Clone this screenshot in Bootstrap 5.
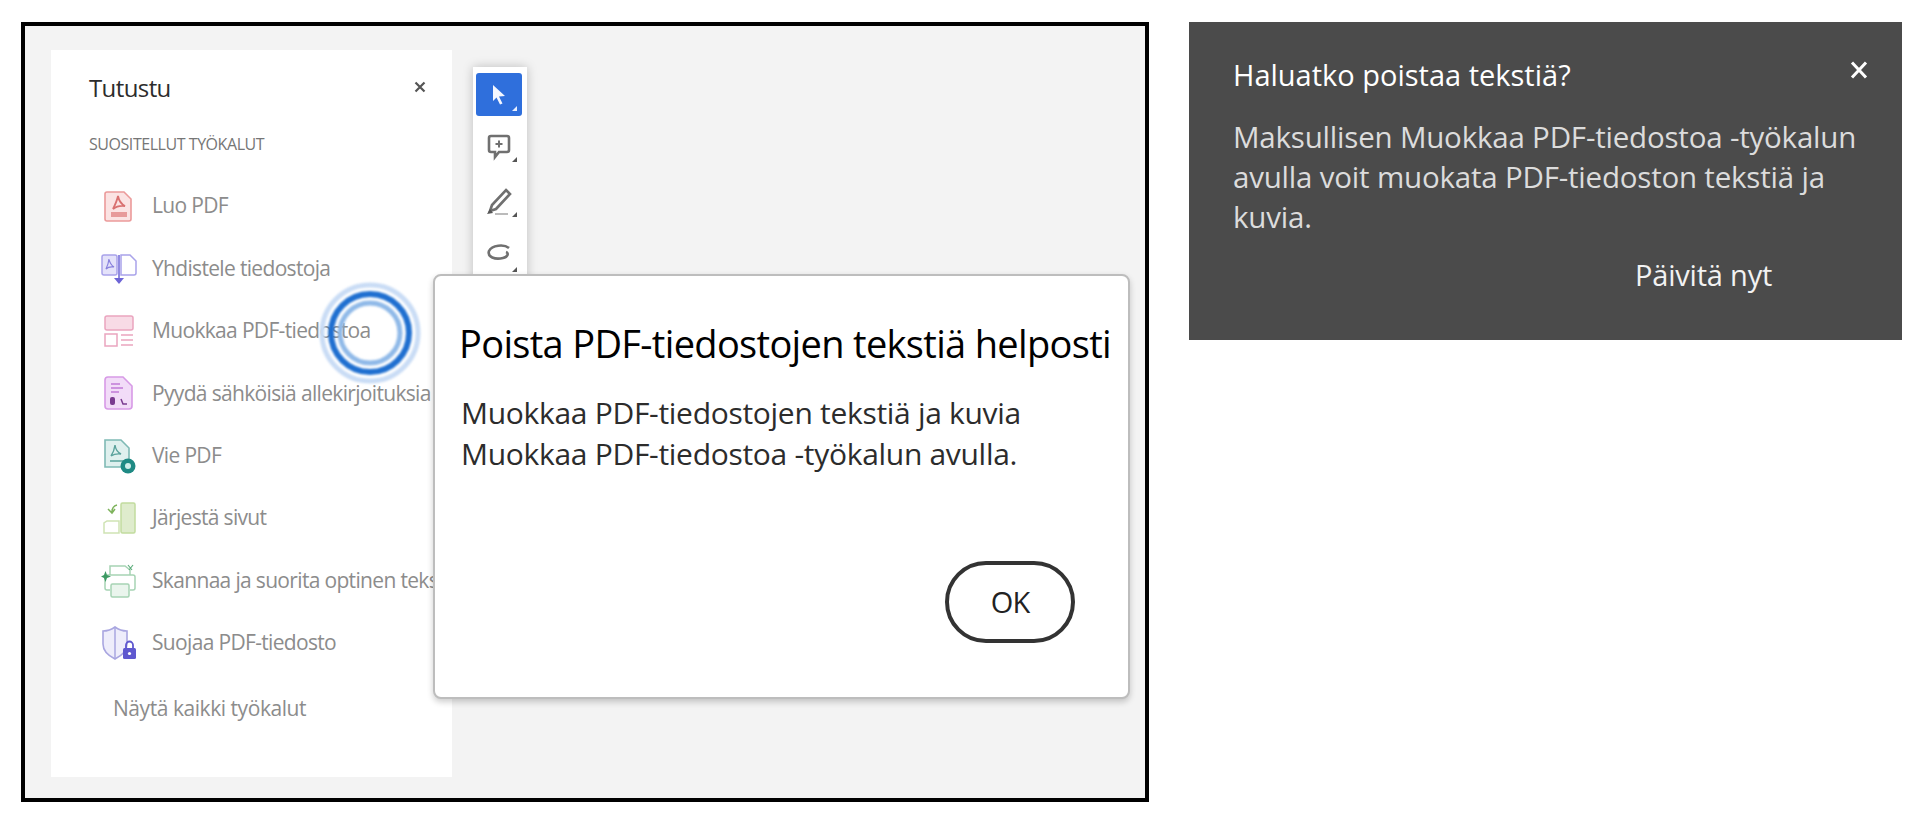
<!DOCTYPE html>
<html lang="fi">
<head>
    <title>Poista tekstiä</title>
    <meta charset="UTF-8">
    <meta name="viewport" content="width=device-width, initial-scale=1.0">
    <link href="https://cdn.jsdelivr.net/npm/bootstrap@5.3.0/dist/css/bootstrap.min.css" rel="stylesheet">
    <style>
        body { font-family: "Open Sans", "Noto Sans", sans-serif; background: #fff; overflow: hidden; }
        .page-wrap { padding: 22px 18px 0 21px; gap: 40px; }
        .app-frame { position: relative; width: 1128px; height: 780px; flex: none; border: 4px solid #000; background: #f3f3f3; padding: 24px 26px; overflow: hidden; }
        .tool-panel { width: 401px; height: 727px; flex: none; background: #fff; padding: 0 26px 0 38px; overflow: hidden; }
        .panel-head { height: 79px; padding-top: 20px; font-size: 24px; line-height: 36px; letter-spacing: -.6px; color: #2c2c2c; }
        .panel-close { width: 12px; height: 12px; margin-top: 11px; }
        .panel-sub { font-size: 16px; letter-spacing: -.45px; color: #767676; height: 46px; line-height: 30px; white-space: nowrap; }
        .tool-row { height: 62.4px; padding: 0 0 0 12px; gap: 15px; border: 0; background: transparent; font-size: 21px; letter-spacing: -.67px; color: #8c8c8c; white-space: nowrap; }
        .tool-row svg { width: 36px; height: 36px; flex: none; filter: blur(.6px); }
        .show-all { padding: 19px 0 0 24px; font-size: 21px; letter-spacing: -.45px; color: #8c8c8c; }
        .tool-strip { width: 54px; margin: 17px 0 0 21px; height: 300px; flex: none; background: #fff; box-shadow: 0 0 10px rgba(0,0,0,.22); padding: 6px 3px; gap: 12px; }
        .strip-btn { width: 46px; height: 43px; flex: none; border-radius: 3px; }
        .strip-on { background: #2f6fdc; }
        .strip-btn svg { width: 46px; height: 43px; display: block; filter: blur(.5px); }
        .help-ring { position: absolute; left: 293px; top: 255px; width: 104px; height: 104px; filter: blur(.8px); }
        .hint-card { position: absolute; left: 408px; top: 248px; width: 697px; height: 425px; border: 2px solid #bdbdbd; border-radius: 8px; box-shadow: 0 3px 6px rgba(0,0,0,.2); background: #fff; padding: 0 0 0 24px; }
        .hint-title { margin: 43px 0 0; font-size: 38px; font-weight: 400; line-height: 48px; letter-spacing: -.67px; color: #000; white-space: nowrap; }
        .hint-text { margin: 26px 0 0 2px; font-size: 30px; line-height: 40.5px; letter-spacing: -.3px; color: #2c2c2c; }
        .ok-btn { position: absolute; left: 510px; top: 285px; width: 130px; height: 82px; padding: 0; border: 4px solid #333; border-radius: 41px; background: #fff; font-size: 29px; letter-spacing: -.8px; color: #222; }
        .upsell { width: 713px; height: 318px; flex: none; background: #4b4b4b; padding: 34px 44px; color: #dcdcdc; }
        .upsell-title { font-size: 29px; line-height: 38px; letter-spacing: 0; color: #fff; margin: 0; font-weight: 400; }
        .upsell-x { width: 18px; height: 18px; margin: 5px -10px 0 0; }
        .upsell-text { margin: 23px 0 0; font-size: 29.500px; line-height: 40px; letter-spacing: -.2px; }
        .upsell-link { margin: 18px 0 0 402px; font-size: 29px; letter-spacing: -.2px; line-height: 40px; color: #f2f2f2; }
    </style>
</head>
<body>
    <div class="page-wrap d-flex align-items-start">
        <div class="app-frame d-flex align-items-start">
            <div class="tool-panel">
                <div class="panel-head d-flex justify-content-between align-items-start">
                    <span>Tutustu</span>
                    <svg class="panel-close" viewBox="0 0 12 12"><path d="M1.5 1.5l9 9M10.500 1.5l-9 9" stroke="#555" stroke-width="2.200"/></svg>
                </div>
                <div class="panel-sub">SUOSITELLUT TYÖKALUT</div>
                <div class="list-group list-group-flush">
                    <div class="list-group-item tool-row d-flex align-items-center">
                        <svg viewBox="0 0 36 36"><path d="M6 4h17l7 7v20a2 2 0 0 1-2 2H6a2 2 0 0 1-2-2V6a2 2 0 0 1 2-2z" fill="#fbe3e3" stroke="#eb9a9a" stroke-width="1.600"/><path d="M17 8c1 5 3 8 7 10-4-.5-9 .5-12 3 2-4 4-8 5-13z" fill="none" stroke="#d97070" stroke-width="1.800"/><rect x="10" y="24" width="16" height="5" fill="#e79a9a"/></svg>
                        <span>Luo PDF</span>
                    </div>
                    <div class="list-group-item tool-row d-flex align-items-center">
                        <svg viewBox="0 0 36 36"><rect x="1" y="4" width="15" height="20" rx="2" fill="#e4e2fa" stroke="#a9a3ea" stroke-width="1.500"/><path d="M8 8c.5 3 2 6 5 8-3-.5-6 0-8 2 1.500-3 2.500-6 3-10z" fill="none" stroke="#8880dd" stroke-width="1.200"/><path d="M20 4h9l6 6v12a2 2 0 0 1-2 2H20z" fill="#fff" stroke="#a9a3ea" stroke-width="1.500"/><path d="M18 4v24" stroke="#6d64d6" stroke-width="1.500"/><path d="M13 27h10l-5 6z" fill="#6d64d6"/></svg>
                        <span>Yhdistele tiedostoja</span>
                    </div>
                    <div class="list-group-item tool-row d-flex align-items-center">
                        <svg viewBox="0 0 36 36"><rect x="4" y="3" width="28" height="14" rx="2" fill="#f8dbe6" stroke="#eaa5bf" stroke-width="1.500"/><rect x="4" y="21" width="12" height="12" fill="#fff" stroke="#eaa5bf" stroke-width="1.500"/><path d="M20 22h12M20 27h12M20 32h12" stroke="#eaa5bf" stroke-width="1.500"/></svg>
                        <span>Muokkaa PDF-tiedostoa</span>
                    </div>
                    <div class="list-group-item tool-row d-flex align-items-center">
                        <svg viewBox="0 0 36 36"><path d="M7 2h15l9 9v20a3 3 0 0 1-3 3H7a3 3 0 0 1-3-3V5a3 3 0 0 1 3-3z" fill="#f2dcf8" stroke="#d79ae6" stroke-width="1.600"/><path d="M10 9h9M10 13h12M10 17h8" stroke="#c17ad6" stroke-width="1.400"/><rect x="9" y="22" width="5" height="8" rx="2" fill="#7a3b90"/><path d="M20 24l2 5h4" fill="none" stroke="#7a3b90" stroke-width="1.500"/></svg>
                        <span>Pyydä sähköisiä allekirjoituksia</span>
                    </div>
                    <div class="list-group-item tool-row d-flex align-items-center">
                        <svg viewBox="0 0 36 36"><path d="M4 2h16l8 8v19H4z" fill="#dff0ee" stroke="#7fbab5" stroke-width="1.600"/><path d="M14 7c.5 4 2 7 6 9-4-.5-7 0-10 2 2-3 3.500-7 4-11zM9 23h14" fill="none" stroke="#5aa29c" stroke-width="1.400"/><circle cx="27" cy="28" r="7.500" fill="#1f8a84"/><circle cx="27" cy="28" r="3" fill="#cfeeea"/></svg>
                        <span>Vie PDF</span>
                    </div>
                    <div class="list-group-item tool-row d-flex align-items-center">
                        <svg viewBox="0 0 36 36"><rect x="20" y="3" width="14" height="30" rx="1.500" fill="#dfeccd" stroke="#c2dc9f" stroke-width="1.500"/><path d="M3 33V23l3-2h12v12z" fill="#fff" stroke="#cfe3b4" stroke-width="1.500"/><path d="M16 5c-4 1-5 3-5 7M7 9l4 4 3-4" fill="none" stroke="#7eb35c" stroke-width="1.500"/></svg>
                        <span>Järjestä sivut</span>
                    </div>
                    <div class="list-group-item tool-row d-flex align-items-center">
                        <svg viewBox="0 0 36 36"><path d="M9 12V3h15l5 4v5" fill="none" stroke="#a6d3b4" stroke-width="1.500"/><path d="M6 12h26a2 2 0 0 1 2 2v11a2 2 0 0 1-2 2h-3" fill="#fff" stroke="#a6d3b4" stroke-width="1.500"/><path d="M9 27H6a2 2 0 0 1-2-2V14" fill="none" stroke="#a6d3b4" stroke-width="1.500"/><rect x="10" y="21" width="18" height="13" rx="1.500" fill="#eaf5ed" stroke="#a6d3b4" stroke-width="1.500"/><path d="M3 12l1.500-4 1.500 4 4 1.500-4 1.500-1.500 4-1.500-4-3-1.500z" fill="#3d9a63"/><path d="M27 2l4 5M32 2l-4 5" stroke="#5fae7d" stroke-width="1.200"/></svg>
                        <span>Skannaa ja suorita optinen teks</span>
                    </div>
                    <div class="list-group-item tool-row d-flex align-items-center">
                        <svg viewBox="0 0 36 36"><path d="M14 2c4 3 8 4 12 4v13c0 7-6 12-12 15C8 31 2 26 2 19V6c4 0 8-1 12-4z" fill="#eeedfb" stroke="#a9a6e0" stroke-width="1.600"/><path d="M14 2v32" stroke="#a9a6e0" stroke-width="1.500"/><rect x="22" y="23" width="13" height="11" rx="1.500" fill="#5f58cf"/><path d="M25 23v-3a3.500 3.500 0 0 1 7 0v3" fill="none" stroke="#5f58cf" stroke-width="1.800"/><circle cx="28.500" cy="28.500" r="1.600" fill="#fff"/></svg>
                        <span>Suojaa PDF-tiedosto</span>
                    </div>
                </div>
                <div class="show-all">Näytä kaikki työkalut</div>
            </div>
            <div class="tool-strip d-flex flex-column">
                <div class="strip-btn strip-on">
                    <svg viewBox="0 0 46 43"><path d="M17 12l12 11-6 .5 3.500 7-2.500 1-3.500-7L17 28z" fill="#f4f7ff"/><path d="M41 33v5h-5z" fill="#e7eeff"/></svg>
                </div>
                <div class="strip-btn">
                    <svg viewBox="0 0 46 43"><path d="M15 8h16a2 2 0 0 1 2 2v12a2 2 0 0 1-2 2H23l-4 5v-5h-4a2 2 0 0 1-2-2V10a2 2 0 0 1 2-2z" fill="#fff" stroke="#707070" stroke-width="2.600"/><path d="M23 12.500v7M19.500 16h7" stroke="#707070" stroke-width="2"/><path d="M41 29v5h-5z" fill="#555"/></svg>
                </div>
                <div class="strip-btn">
                    <svg viewBox="0 0 46 43"><path d="M30 7l4 4-14 15-6 2 2-6z" fill="#fff" stroke="#707070" stroke-width="2.600"/><path d="M11 31l6-1-3-4z" fill="#555"/><path d="M19 31h13" stroke="#bbb" stroke-width="2"/><path d="M41 29v5h-5z" fill="#555"/></svg>
                </div>
                <div class="strip-btn">
                    <svg viewBox="0 0 46 43"><path d="M33 10c-5-4-17-3-20 3-2 6 6 9 14 7 5-1 6-5 3-6" fill="none" stroke="#707070" stroke-width="2.600"/><path d="M41 29v5h-5z" fill="#555"/></svg>
                </div>
            </div>
            <svg class="help-ring" viewBox="0 0 104 104" fill="none">
                <circle cx="52" cy="52" r="48" stroke="#c9dcf5" stroke-width="5"/>
                <circle cx="52" cy="52" r="39" stroke="#1f6fd0" stroke-width="6"/>
                <circle cx="52" cy="52" r="30" stroke="#8fb9e8" stroke-width="5"/>
            </svg>
            <div class="hint-card card">
                <h2 class="hint-title">Poista PDF-tiedostojen tekstiä helposti</h2>
                <p class="hint-text">Muokkaa PDF-tiedostojen tekstiä ja kuvia<br>Muokkaa PDF-tiedostoa -työkalun avulla.</p>
                <button type="button" class="btn ok-btn">OK</button>
            </div>
        </div>
        <div class="upsell">
            <div class="d-flex justify-content-between align-items-start">
                <h3 class="upsell-title">Haluatko poistaa tekstiä?</h3>
                <svg class="upsell-x" viewBox="0 0 18 18"><path d="M2 1.500l14 15M16 1.500l-14 15" stroke="#fff" stroke-width="3"/></svg>
            </div>
            <p class="upsell-text">Maksullisen Muokkaa PDF-tiedostoa -työkalun<br>avulla voit muokata PDF-tiedoston tekstiä ja<br>kuvia.</p>
            <div class="upsell-link">Päivitä nyt</div>
        </div>
    </div>
    <script src="https://cdn.jsdelivr.net/npm/bootstrap@5.3.0/dist/js/bootstrap.bundle.min.js"></script>
</body>
</html>
